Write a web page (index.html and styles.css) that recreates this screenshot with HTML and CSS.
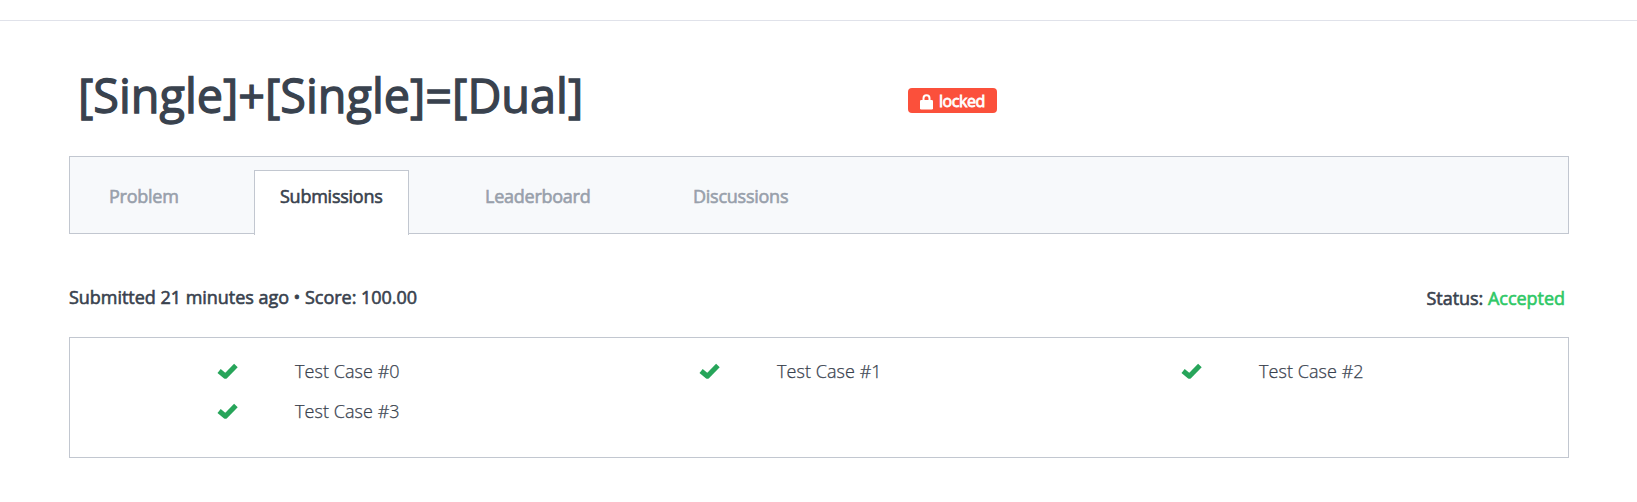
FILE: index.html
```html
<!DOCTYPE html>
<html lang="en"><head><meta charset="utf-8"><title>Submissions</title><link rel="stylesheet" href="styles.css"></head>
<body>
<header class="topbar"></header>
<main class="page">
<div class="heading"><h1 class="title">[Single]+[Single]=[Dual]</h1><span class="badge"><svg class="lock" viewBox="0 0 13 16"><path d="M3.5 8V4.2a3 3 0 0 1 6 0V8" fill="none" stroke="#fff" stroke-width="2"/><rect y="6" width="13" height="9.6" rx="1.3" fill="#fff"/></svg><span class="badge-text">locked</span></span></div>
<nav class="tabs"><a class="tab problem">Problem</a><a class="tab active">Submissions</a><a class="tab leaderboard">Leaderboard</a><a class="tab discussions">Discussions</a></nav>
<div class="summary"><span class="submitted">Submitted 21 minutes ago • Score: 100.00</span><span class="status">Status: <span class="accepted">Accepted</span></span></div>
<section class="cases">
<div class="case"><svg class="check" viewBox="0 0 20 16"><path d="M2 7.5l6 5L18 2.2" /></svg><span class="case-name">Test Case #0</span></div>
<div class="case"><svg class="check" viewBox="0 0 20 16"><path d="M2 7.5l6 5L18 2.2" /></svg><span class="case-name">Test Case #1</span></div>
<div class="case"><svg class="check" viewBox="0 0 20 16"><path d="M2 7.5l6 5L18 2.2" /></svg><span class="case-name">Test Case #2</span></div>
<div class="case"><svg class="check" viewBox="0 0 20 16"><path d="M2 7.5l6 5L18 2.2" /></svg><span class="case-name">Test Case #3</span></div>
</section>
</main></body></html>
```
FILE: styles.css
```css
*{box-sizing:border-box}
body{margin:0;background:#fff;color:#39424e;font-family:"Open Sans",sans-serif;font-size:18px;overflow:hidden}
.topbar{height:21px;border-bottom:1px solid #e0e2ea}
.page{padding:0 68px 0 69px}
.heading{height:135px;display:flex;align-items:flex-start;padding-left:9px}
.title{margin:41px 0 0;width:830px;font-size:46.8px;line-height:66px;font-weight:400;-webkit-text-stroke:1.3px;white-space:nowrap}
.badge{margin-top:67px;width:89px;height:25px;border-radius:4px;background:#fb503b;color:#fff;display:flex;align-items:center;padding-left:12px;font-size:16px;letter-spacing:-.45px;-webkit-text-stroke:.8px}
.badge-text{line-height:25px;margin-top:2px}
.lock{width:13px;height:16px;margin-right:6px;margin-top:2px}
.tabs{height:78px;border:1px solid #c2c7d0;background:#f7f9fb;display:flex;letter-spacing:-.25px;-webkit-text-stroke:.6px;color:#98a0ab}
.tab{padding:25px 25px;line-height:28px;height:77px}
.problem{width:184px;padding-left:39px}
.active{width:155px;height:65px;margin-top:13px;padding:11px 25px;background:#fff;border:1px solid #c2c7d0;border-bottom:0;color:#39424e}
.leaderboard{margin-left:51px;width:208px}
.summary{height:103px;display:flex;justify-content:space-between;padding:50px 4px 0 0;line-height:28px;-webkit-text-stroke:.6px;letter-spacing:-.03px}
.submitted{margin-top:-1px}
.accepted{color:#2ec866}
.cases{height:121px;border:1px solid #c2c7d0;display:grid;grid-template-columns:repeat(3,482px);grid-template-rows:40px 40px;padding-top:13px}
.case{display:flex;align-items:center;padding-left:147px;font-weight:300;letter-spacing:.06px;-webkit-text-stroke:.25px}
.check{width:21px;height:17px;margin-right:57px;fill:none;stroke:#27a55a;stroke-width:4.8;stroke-linejoin:round}
```
